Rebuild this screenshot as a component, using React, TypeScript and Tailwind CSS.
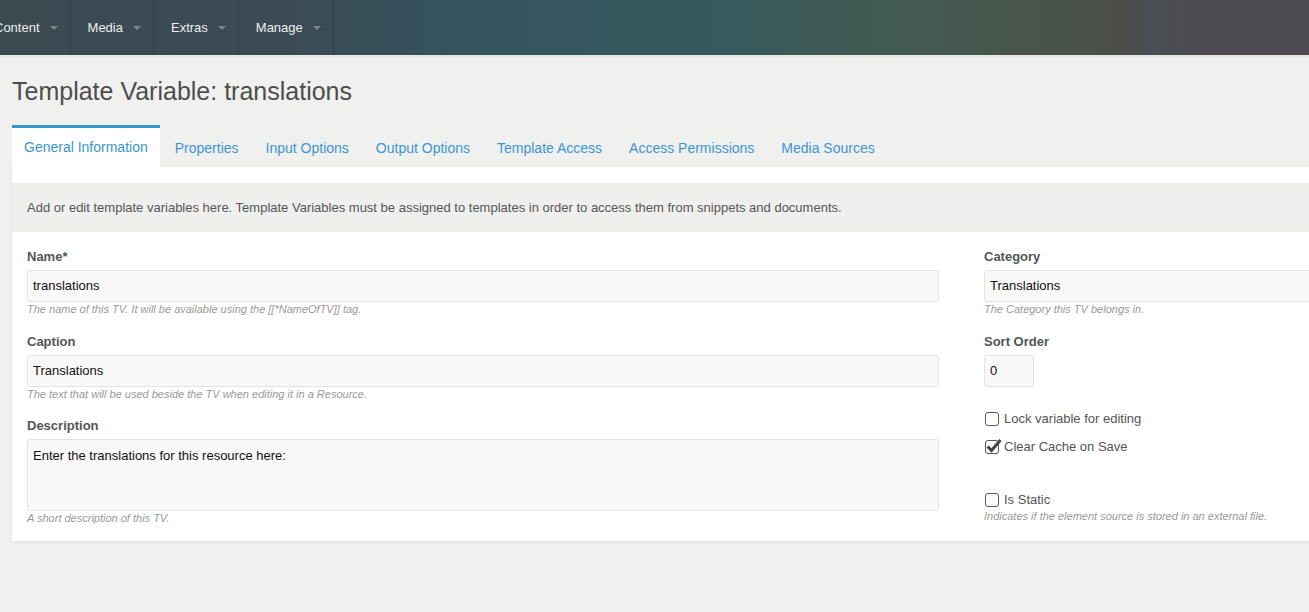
import React from 'react';

const navItems = ['Content', 'Media', 'Extras', 'Manage'];
const tabs = [
  'General Information',
  'Properties',
  'Input Options',
  'Output Options',
  'Template Access',
  'Access Permissions',
  'Media Sources',
];

function Caret() {
  return (
    <span className="ml-[10px] inline-block h-0 w-0 border-x-[4px] border-t-[4px] border-x-transparent border-t-[#7d8589]" />
  );
}

function Checkbox({ checked }: { checked?: boolean }) {
  return (
    <span className="relative inline-block h-[14px] w-[14px] rounded-[3px] border-[1.5px] border-[#555]">
      {checked && (
        <svg
          className="absolute -left-[1px] -top-[4px]"
          width="18"
          height="18"
          viewBox="0 0 18 18"
        >
          <path d="M2.5 9.5 L6.5 13.5 L15.5 3" fill="none" stroke="#444" strokeWidth="3" />
        </svg>
      )}
    </span>
  );
}

function Field({
  label,
  value,
  help,
  className = '',
}: {
  label: string;
  value: string;
  help: string;
  className?: string;
}) {
  return (
    <div className={className}>
      <div className="mb-[6px] text-[13px] font-bold leading-[15px] text-[#555]">{label}</div>
      <div className="flex h-[32px] items-center rounded-[3px] border border-[#e2e4e2] bg-[#f8f9f8] px-[5px] text-[13px] text-[#111]">
        {value}
      </div>
      <div className="mt-[1px] text-[11px] italic leading-[13px] text-[#999]">{help}</div>
    </div>
  );
}

export default function App() {
  return (
    <div
      className="min-h-[612px] w-full overflow-hidden bg-[#f0f1ef]"
      style={{ fontFamily: '"Liberation Sans", Arial, sans-serif' }}
    >
      <div className="flex h-[55px] bg-[linear-gradient(90deg,#3c4a52_0%,#3b4b54_22%,#34535f_35%,#365a5e_56%,#3d5a55_62%,#435a50_70%,#48554d_78%,#4b4f4a_84%,#4c4b48_86%,#4a4e53_88%,#4d4a4f_92%,#4d4a4f_100%)]">
        <div className="-ml-[23px] flex">
          {navItems.map((item) => (
            <div
              key={item}
              className="flex h-full items-center border-r border-[#2f3d44] pl-[17px] pr-[12px] text-[13px] text-[#eceeee]"
            >
              {item}
              <Caret />
            </div>
          ))}
        </div>
      </div>
      <div className="h-[2px] bg-[#e6e9e4]" />

      <div className="pl-[12px]">
        <h1 className="mt-[20px] text-[25px] leading-[28px] text-[#4d4d4d]">
          Template Variable: translations
        </h1>

        <div className="mt-[20px] flex gap-[3px]">
          {tabs.map((tab, i) => (
            <div
              key={tab}
              className={
                i === 0
                  ? 'flex h-[42px] items-center border-t-[3px] border-[#3697cd] bg-white px-3 text-[14px] text-[#3697cd]'
                  : 'flex h-[42px] items-center px-3 pt-[5px] text-[14px] text-[#3d95d6]'
              }
            >
              {tab}
            </div>
          ))}
        </div>

        <div className="-mr-[40px] bg-white pb-[16px] pt-[16px] shadow-[0_1px_3px_rgba(0,0,0,0.08)]">
          <div className="flex h-[49px] items-center bg-[#eff0ee] pl-[15px] text-[13px] text-[#555]">
            Add or edit template variables here. Template Variables must be assigned to templates in order to access them from snippets and documents.
          </div>

          <div className="flex gap-[45px] px-[15px] pt-[17px]">
            <div className="w-[912px]">
              <Field
                label="Name*"
                value="translations"
                help="The name of this TV. It will be available using the [[*NameOfTV]] tag."
              />
              <Field
                className="mt-[18px]"
                label="Caption"
                value="Translations"
                help="The text that will be used beside the TV when editing it in a Resource."
              />
              <div className="mt-[17px]">
                <div className="mb-[6px] text-[13px] font-bold leading-[15px] text-[#555]">Description</div>
                <div className="h-[72px] rounded-[3px] border border-[#e2e4e2] bg-[#f8f9f8] px-[5px] pt-[6px] text-[13px] text-[#111]">
                  Enter the translations for this resource here:
                </div>
                <div className="mt-[1px] text-[11px] italic leading-[13px] text-[#999]">
                  A short description of this TV.
                </div>
              </div>
            </div>

            <div className="flex-1">
              <Field label="Category" value="Translations" help="The Category this TV belongs in." />
              <div className="mt-[18px]">
                <div className="mb-[6px] text-[13px] font-bold leading-[15px] text-[#555]">Sort Order</div>
                <div className="flex h-[32px] w-[50px] items-center rounded-[3px] border border-[#e2e4e2] bg-[#f8f9f8] px-[5px] text-[13px] text-[#111]">
                  0
                </div>
              </div>
              <label className="mt-[23px] flex h-[18px] items-center gap-[5px] pl-[1px] text-[13px] text-[#555]">
                <Checkbox />
                Lock variable for editing
              </label>
              <label className="mt-[10px] flex h-[18px] items-center gap-[5px] pl-[1px] text-[13px] text-[#555]">
                <Checkbox checked />
                Clear Cache on Save
              </label>
              <label className="mt-[35px] flex h-[18px] items-center gap-[5px] pl-[1px] text-[13px] text-[#555]">
                <Checkbox />
                Is Static
              </label>
              <div className="mt-[1px] text-[11px] italic leading-[13px] text-[#999]">
                Indicates if the element source is stored in an external file.
              </div>
            </div>
          </div>
        </div>
      </div>
    </div>
  );
}
